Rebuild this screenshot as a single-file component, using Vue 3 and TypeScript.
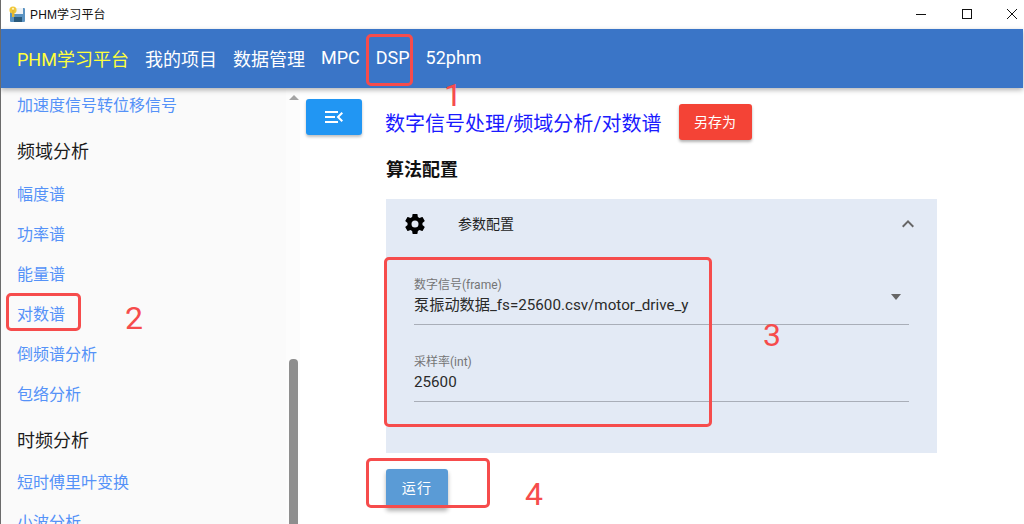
<script setup lang="ts">
interface NavEntry { kind: 'head' | 'link'; text: string }
const nav: string[] = ['我的项目', '数据管理', 'MPC', 'DSP', '52phm']
const side: NavEntry[] = [
  { kind: 'link', text: '加速度信号转位移信号' },
  { kind: 'head', text: '频域分析' },
  { kind: 'link', text: '幅度谱' },
  { kind: 'link', text: '功率谱' },
  { kind: 'link', text: '能量谱' },
  { kind: 'link', text: '对数谱' },
  { kind: 'link', text: '倒频谱分析' },
  { kind: 'link', text: '包络分析' },
  { kind: 'head', text: '时频分析' },
  { kind: 'link', text: '短时傅里叶变换' },
  { kind: 'link', text: '小波分析' },
]
</script>

<template>
  <div class="win">
    <div class="titlebar">
      <svg class="appicon" width="18" height="18" viewBox="0 0 18 18">
        <rect x="2" y="3" width="15" height="14" rx="1" fill="#5b93c2" />
        <rect x="6" y="3" width="9" height="6" fill="#eef2f6" />
        <rect x="6" y="12" width="8" height="5" fill="#2a5a7c" />
        <circle cx="5" cy="5" r="3.6" fill="#f1c83c" />
        <rect x="4" y="5" width="2.4" height="7" fill="#e6b92e" />
        <circle cx="5" cy="3.8" r="1" fill="#fff6c8" />
      </svg>
      <span class="apptitle">PHM学习平台</span>
      <div class="controls">
        <span class="ctl"><svg width="12" height="12" viewBox="0 0 12 12"><path d="M1 6.5H11" stroke="#111" fill="none" /></svg></span>
        <span class="ctl"><svg width="12" height="12" viewBox="0 0 12 12"><rect x="1.5" y="1.5" width="9" height="9" stroke="#111" fill="none" /></svg></span>
        <span class="ctl"><svg width="12" height="12" viewBox="0 0 12 12"><path d="M1 1L11 11M11 1L1 11" stroke="#111" fill="none" /></svg></span>
      </div>
    </div>

    <header class="appbar">
      <span class="brand">PHM学习平台</span>
      <span v-for="n in nav" :key="n" class="navitem">{{ n }}</span>
    </header>

    <div class="body">
      <aside class="sidebar">
        <div class="sidelist">
          <div v-for="e in side" :key="e.text" :class="e.kind === 'head' ? 'sidehead' : 'sidelink'">{{ e.text }}</div>
        </div>
      </aside>
      <div class="scrollbar">
        <span class="uparrow"></span>
        <span class="thumb"></span>
      </div>

      <main class="main">
        <button class="togglebtn" type="button">
          <svg width="24" height="24" viewBox="0 0 24 24"><path fill="#fff" d="M21,15.61L19.59,17L14.58,12L19.59,7L21,8.39L17.44,12L21,15.61M3,6H16V8H3V6M3,13V11H13V13H3M3,18V16H16V18H3Z" /></svg>
        </button>
        <div class="content">
          <div class="titlerow">
            <span class="crumb">数字信号处理/频域分析/对数谱</span>
            <button class="savebtn" type="button">另存为</button>
          </div>
          <h2 class="section">算法配置</h2>
          <section class="panel">
            <div class="panelhead">
              <svg class="gear" width="24" height="24" viewBox="0 0 24 24"><path fill="#000" d="M12,15.5A3.5,3.5 0 0,1 8.5,12A3.5,3.5 0 0,1 12,8.5A3.5,3.5 0 0,1 15.5,12A3.5,3.5 0 0,1 12,15.5M19.43,12.97C19.47,12.65 19.5,12.33 19.5,12C19.5,11.67 19.47,11.34 19.43,11L21.54,9.37C21.73,9.22 21.78,8.95 21.66,8.73L19.66,5.27C19.54,5.05 19.27,4.96 19.05,5.05L16.56,6.05C16.04,5.66 15.5,5.32 14.87,5.07L14.5,2.42C14.46,2.18 14.25,2 14,2H10C9.75,2 9.54,2.18 9.5,2.42L9.13,5.07C8.5,5.32 7.96,5.66 7.44,6.05L4.95,5.05C4.73,4.96 4.46,5.05 4.34,5.27L2.34,8.73C2.21,8.95 2.27,9.22 2.46,9.37L4.57,11C4.53,11.34 4.5,11.67 4.5,12C4.5,12.33 4.53,12.65 4.57,12.97L2.46,14.63C2.27,14.78 2.21,15.05 2.34,15.27L4.34,18.73C4.46,18.95 4.73,19.03 4.95,18.95L7.44,17.94C7.96,18.34 8.5,18.68 9.13,18.93L9.5,21.58C9.54,21.82 9.75,22 10,22H14C14.25,22 14.46,21.82 14.5,21.58L14.87,18.93C15.5,18.67 16.04,18.34 16.56,17.94L19.05,18.95C19.27,19.03 19.54,18.95 19.66,18.73L21.66,15.27C21.78,15.05 21.73,14.78 21.54,14.63L19.43,12.97Z" /></svg>
              <span class="paneltitle">参数配置</span>
              <svg class="chev" width="24" height="24" viewBox="0 0 24 24"><path fill="#666" d="M7.41,15.41L12,10.83L16.59,15.41L18,14L12,8L6,14L7.41,15.41Z" /></svg>
            </div>
            <div class="fields">
              <div class="field">
                <div class="flabel">数字信号(frame)</div>
                <div class="fvalue">泵振动数据_fs=25600.csv/motor_drive_y</div>
                <span class="caret"></span>
              </div>
              <div class="field">
                <div class="flabel">采样率(int)</div>
                <div class="fvalue">25600</div>
              </div>
            </div>
          </section>
          <button class="runbtn" type="button">运行</button>
        </div>
      </main>
    </div>

    <!-- tutorial annotations drawn over the screenshot -->
    <span class="mark m1"></span>
    <span class="mark m2"></span>
    <span class="mark m3"></span>
    <span class="mark m4"></span>
    <span class="num n1">1</span>
    <span class="num n2">2</span>
    <span class="num n3">3</span>
    <span class="num n4">4</span>
  </div>
</template>

<style scoped>
.win {
  position: relative;
  width: 1024px;
  height: 524px;
  overflow: hidden;
  display: flex;
  flex-direction: column;
  box-sizing: border-box;
  border-left: 1px solid #6b6b6b;
  padding-right: 1px;
  background: #fff;
  font-family: Roboto, "Noto Sans CJK SC", sans-serif;
  color: #222;
}
.titlebar {
  height: 29px;
  flex: none;
  display: flex;
  align-items: center;
  padding-left: 7px;
  background: #fff;
}
.appicon { flex: none; margin-right: 4px; margin-top: -2px; }
.apptitle {
  font-size: 12px;
  letter-spacing: 0.15px;
  color: #111;
  margin-top: -2px;
  font-family: "Liberation Sans", "Noto Sans CJK SC", sans-serif;
}
.controls { margin-left: auto; margin-right: -12px; display: flex; margin-top: -2px; }
.ctl {
  width: 45.5px;
  height: 29px;
  display: flex;
  align-items: center;
  justify-content: center;
}
.appbar {
  height: 59px;
  flex: none;
  display: flex;
  align-items: center;
  gap: 16px;
  padding: 0 0 2px 16px;
  box-sizing: border-box;
  background: #3a75c7;
  color: #fff;
  font-size: 18px;
  position: relative;
  z-index: 2;
  box-shadow: 0 2px 5px rgba(0, 0, 0, 0.3);
}
.brand { color: #ffff3b; }
.body { flex: 1; min-height: 0; display: flex; }
.sidebar { width: 285px; flex: none; background: #fafafa; overflow: hidden; }
.sidelist { margin-top: -2px; padding-left: 16px; }
.sidelink { height: 40px; line-height: 40px; font-size: 16px; color: #5592f8; white-space: nowrap; }
.sidehead { height: 48.5px; padding-top: 6px; box-sizing: border-box; line-height: 40px; font-size: 18px; color: #1c1c1c; white-space: nowrap; }
.scrollbar { width: 14px; flex: none; background: #fcfcfc; position: relative; }
.uparrow {
  position: absolute;
  left: 3px;
  top: 7px;
  border-left: 5px solid transparent;
  border-right: 5px solid transparent;
  border-bottom: 5px solid #a3a3a3;
}
.thumb {
  position: absolute;
  left: 3px;
  top: 271px;
  width: 9px;
  height: 260px;
  border-radius: 4px;
  background: #8e8e8e;
}
.main { flex: 1; min-width: 0; display: flex; align-items: flex-start; padding: 11px 0 0 6px; }
.togglebtn {
  width: 56px;
  height: 36px;
  flex: none;
  border: none;
  padding: 0;
  border-radius: 3px;
  background: #2196f3;
  display: flex;
  align-items: center;
  justify-content: center;
  box-shadow: 0 2px 3px rgba(0, 0, 0, 0.25);
}
.content { margin-left: 24px; width: 551px; padding-top: 5px; }
.titlerow { display: flex; align-items: center; gap: 17px; height: 36px; }
.crumb { font-size: 20px; color: #1a1aff; white-space: nowrap; margin-left: -1px; }
.savebtn {
  width: 73px;
  height: 36px;
  border: none;
  border-radius: 3px;
  background: #f44336;
  color: #fff;
  font: inherit;
  font-size: 14px;
  padding: 0 0 3px;
  box-shadow: 0 2px 3px rgba(0, 0, 0, 0.3);
}
.section { margin: 0; height: 59px; line-height: 60px; font-size: 18px; font-weight: 700; color: #111; }
.panel { background: #e3eaf5; height: 254px; }
.panelhead { height: 50px; display: flex; align-items: center; padding: 0 17px; }
.paneltitle { font-size: 14px; margin-left: 31px; margin-top: -2px; color: #222; }
.chev { margin-left: auto; }
.gear { flex: none; }
.fields { padding: 26px 28px 0; }
.field { position: relative; box-sizing: border-box; border-bottom: 1px solid #a9aeb8; height: 50px; margin-bottom: 27px; padding-top: 2px; }
.flabel { font-size: 12px; line-height: 16px; color: #757575; height: 17px; }
.fvalue { font-size: 15.2px; line-height: 22px; color: #2a2a2a; white-space: nowrap; }
.caret {
  position: absolute;
  right: 8px;
  top: 19px;
  border-left: 5px solid transparent;
  border-right: 5px solid transparent;
  border-top: 6px solid #666;
}
.runbtn {
  display: block;
  margin-top: 16px;
  width: 62px;
  height: 39px;
  border: none;
  border-radius: 3px;
  background: #5a9bd6;
  color: #fff;
  font: inherit;
  font-size: 14px;
  letter-spacing: 1.2px;
  padding: 0 0 3px;
  box-shadow: 0 3px 4px rgba(0, 0, 0, 0.3);
}
.mark {
  position: absolute;
  border: 3px solid #f64c4c;
  border-radius: 5px;
  box-sizing: border-box;
  z-index: 3;
}
.m1 { left: 365px; top: 34px; width: 47px; height: 52px; }
.m2 { left: 5px; top: 293px; width: 75px; height: 38px; }
.m3 { left: 383px; top: 257px; width: 328px; height: 170px; }
.m4 { left: 365px; top: 458px; width: 124px; height: 50px; }
.num {
  position: absolute;
  z-index: 3;
  font-family: Roboto, sans-serif;
  font-size: 32px;
  line-height: 32px;
  color: #f64c4c;
}
.n1 { left: 443px; top: 79px; }
.n2 { left: 124px; top: 302px; }
.n3 { left: 762px; top: 319px; }
.n4 { left: 524px; top: 478px; }
</style>

<style>
html, body { margin: 0; padding: 0; background: #fff; overflow: hidden; }
</style>
